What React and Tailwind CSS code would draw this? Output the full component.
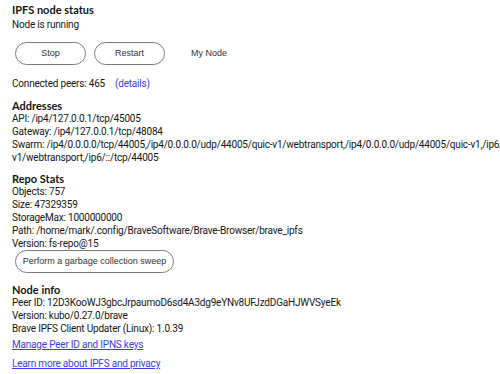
import React from "react";

const swarmFirst =
  "Swarm: /ip4/0.0.0.0/tcp/44005,/ip4/0.0.0.0/udp/44005/quic-v1/webtransport,/ip4/0.0.0.0/udp/44005/quic-v1,/ip6/::/udp/44005/quic-";
const swarmSecond = "v1/webtransport,/ip6/::/tcp/44005";

const PillButton = ({ children, className = "" }) => (
  <button
    className={`h-[23px] whitespace-nowrap rounded-full border border-[#7a7a7a] bg-white text-[9px] leading-[13px] tracking-normal text-[#333] font-['Liberation_Sans',Arial,sans-serif] ${className}`}
  >
    {children}
  </button>
);

const Heading = ({ children, className = "" }) => (
  <h2 className={`font-bold text-[11px] leading-[13px] tracking-normal font-['Lato',sans-serif] ${className}`}>
    {children}
  </h2>
);

const App = () => {
  return (
    <div className="w-[500px] h-[374px] overflow-hidden bg-white">
      <div className="w-[700px] pl-[12px] pt-[3px] text-[10px] leading-[13px] tracking-[-0.2px] text-[#161616] font-['Roboto',sans-serif]">
        {/* Status */}
        <Heading>IPFS node status</Heading>
        <p className="mt-[2px]">Node is running</p>
        <div className="mt-[11px] flex items-center gap-[8px] pl-[3px]">
          <PillButton className="w-[71px]">Stop</PillButton>
          <PillButton className="w-[71px]">Restart</PillButton>
          <span className="ml-[18px] text-[9px] tracking-normal text-[#333] font-['Liberation_Sans',Arial,sans-serif]">
            My Node
          </span>
        </div>
        <p className="mt-[12px]">
          Connected peers: 465
          <a href="#" className="ml-[10px] text-[#3b3bf0]">
            (details)
          </a>
        </p>

        {/* Addresses */}
        <Heading className="mt-[9px]">Addresses</Heading>
        <div>
          <p>API: /ip4/127.0.0.1/tcp/45005</p>
          <p>Gateway: /ip4/127.0.0.1/tcp/48084</p>
          <p className="whitespace-nowrap">{swarmFirst}</p>
          <p>{swarmSecond}</p>
        </div>

        {/* Repo */}
        <Heading className="mt-[8px]">Repo Stats</Heading>
        <div>
          <p>Objects: 757</p>
          <p>Size: 47329359</p>
          <p>StorageMax: 1000000000</p>
          <p>Path: /home/mark/.config/BraveSoftware/Brave-Browser/brave_ipfs</p>
          <p>Version: fs-repo@15</p>
        </div>
        <div className="pl-[3px]">
          <PillButton className="w-[159px]">Perform a garbage collection sweep</PillButton>
        </div>

        {/* Node info */}
        <Heading className="mt-[10px]">Node info</Heading>
        <div>
          <p>Peer ID: 12D3KooWJ3gbcJrpaumoD6sd4A3dg9eYNv8UFJzdDGaHJWVSyeEk</p>
          <p>Version: kubo/0.27.0/brave</p>
          <p>Brave IPFS Client Updater (Linux): 1.0.39</p>
        </div>
        <p className="mt-[3px]">
          <a href="#" className="underline text-[#3b3bf0]">
            Manage Peer ID and IPNS keys
          </a>
        </p>
        <p className="mt-[6px]">
          <a href="#" className="underline text-[#3b3bf0]">
            Learn more about IPFS and privacy
          </a>
        </p>
      </div>
    </div>
  );
};

export default App;
